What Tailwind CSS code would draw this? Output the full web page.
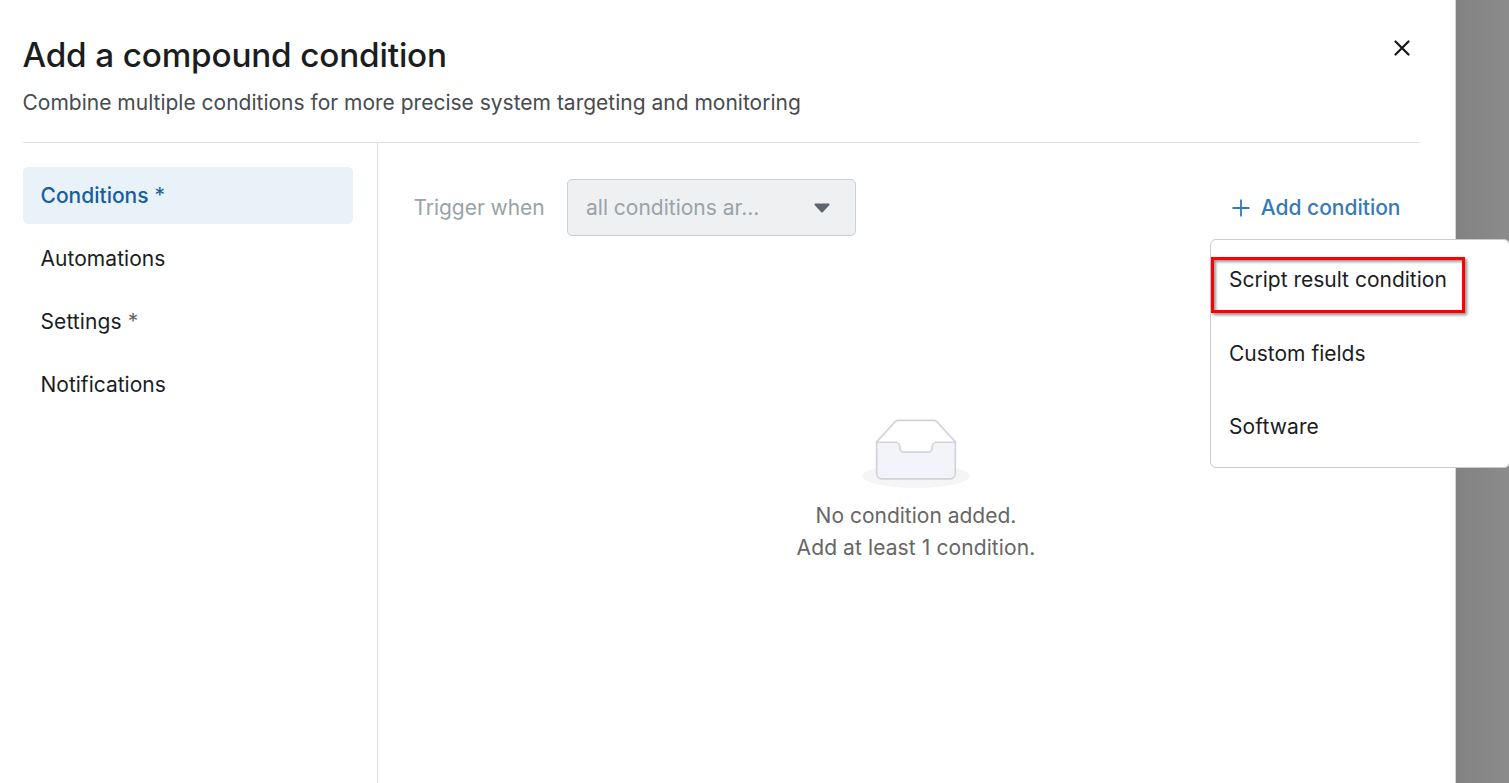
<!DOCTYPE html>
<html lang="en">
<head>
<meta charset="utf-8">
<title>Add a compound condition</title>
<script src="https://cdn.jsdelivr.net/npm/@tailwindcss/browser@4"></script>
</head>
<body class="h-[783px] overflow-hidden bg-linear-to-r from-[#828282] from-[96.5%] to-[#8b8b8b] font-[Inter,sans-serif] text-[21px] leading-8 whitespace-nowrap text-[#1b1d1f]">
<div class="relative h-[783px] w-[1509px] overflow-hidden">
  <section class="flex h-full w-[1456px] flex-col border-r border-[#d5d5d5] bg-white pl-[23px] pr-9">
    <header class="flex h-[143px] shrink-0 items-start justify-between border-b border-[#dddfe2]">
      <div class="pt-[35px]">
        <h1 class="-ml-[0.5px] text-[33.300px] leading-10 font-medium tracking-[-0.17px] text-[#1b1d1f]">Add a compound condition</h1>
        <p class="mt-3 -ml-[0.5px] text-[#474b4f]">Combine multiple conditions for more precise system targeting and monitoring</p>
      </div>
      <button class="mt-10 mr-[9px]" aria-label="Close">
        <svg class="size-4" viewBox="0 0 16 16" fill="none" stroke="#151719" stroke-width="2.2" stroke-linecap="round"><path d="M1.500 1.500 14.500 14.500M14.500 1.500 1.500 14.500"/></svg>
      </button>
    </header>
    <div class="flex min-h-0 flex-1">
      <nav class="flex w-[355px] shrink-0 flex-col gap-1.5 border-r border-[#dddfe2] pt-6 pr-6">
        <a class="flex h-[57px] items-center rounded-[5px] bg-[#eaf2f9] pl-[17.5px] font-medium text-[#155e9f]">Conditions<span class="ml-1.5 font-normal">*</span></a>
        <a class="flex h-[57px] items-center pl-[17.5px] tracking-[0.05px]">Automations</a>
        <a class="flex h-[57px] items-center pl-[17.5px] tracking-[0.1px]">Settings<span class="ml-1.5 text-[#666]">*</span></a>
        <a class="flex h-[57px] items-center pl-[17.5px]">Notifications</a>
      </nav>
      <main class="flex flex-1 flex-col pt-9 pl-9">
        <div class="flex h-[57px] items-center">
          <span class="-ml-[0.5px] w-[153.5px] tracking-[-0.05px] text-[#98a3aa]">Trigger when</span>
          <div class="flex h-[57px] w-[289px] items-center justify-between rounded-[5px] border border-[#c9d0d6] bg-[#eff0f2] pr-[25px] pl-[18px] text-[#98a3aa]">
            <span>all conditions ar...</span>
            <svg class="h-2.5 w-4" viewBox="0 0 16 10" fill="#5b666d"><path d="M1.400.5h13.200c.9 0 1.300 1 .6 1.700L9 9a1.400 1.400 0 0 1-2 0L.8 2.200C.1 1.500.500.5 1.400.5z"/></svg>
          </div>
          <button class="mr-[18.5px] ml-auto flex items-center gap-[11px] font-medium text-[#337ab7]">
            <svg class="size-[18px]" viewBox="0 0 18 18" stroke="currentColor" stroke-width="1.8"><path d="M9 .5v17M.5 9h17"/></svg>
            <span>Add condition</span>
          </button>
        </div>
        <div class="mt-[183px] flex w-[1004px] flex-col items-center text-[#666]">
          <svg class="h-[70px] w-[108px]" viewBox="0 0 64 41.5" fill="none"><g transform="translate(0 .8)"><ellipse cx="32" cy="33" rx="32" ry="7" fill="#f5f5f7"/><g stroke="#d2d2dc"><path fill="#fff" d="M55.300 12.760 44.854 1.258C44.367.474 43.656 0 42.907 0H21.093c-.749 0-1.460.474-1.947 1.257L8.700 12.761V22h46.600z"/><path fill="#f3f4fa" d="M41.613 15.931c0-1.605.994-2.930 2.227-2.931H55.300v18.137C55.300 33.260 53.980 34.700 52.350 34.700h-40.700C10.020 34.700 8.700 33.259 8.700 31.137V13h11.460c1.233 0 2.227 1.323 2.227 2.928v.022c0 1.605 1.005 2.901 2.237 2.901h14.752c1.232 0 2.237-1.308 2.237-2.913z"/></g></g></svg>
          <p class="mt-[11px]">No condition added.</p>
          <p class="tracking-[0.1px]">Add at least 1 condition.</p>
        </div>
      </main>
    </div>
  </section>
  <div class="absolute top-[239px] left-[1210px] flex h-[229px] w-[300px] flex-col rounded-md border border-[#c9cbd3] bg-white pt-6 pl-[18px]">
    <span>Script result condition</span>
    <span class="mt-[42px]">Custom fields</span>
    <span class="mt-[41px] tracking-[0.1px]">Software</span>
  </div>
  <div class="absolute top-[257px] left-[1211px] h-14 w-[254px] border-3 border-[#f00] shadow-[2px_2px_3px_rgba(0,0,0,0.45),inset_2px_2px_3px_rgba(0,0,0,0.4)]"></div>
</div>
</body>
</html>
